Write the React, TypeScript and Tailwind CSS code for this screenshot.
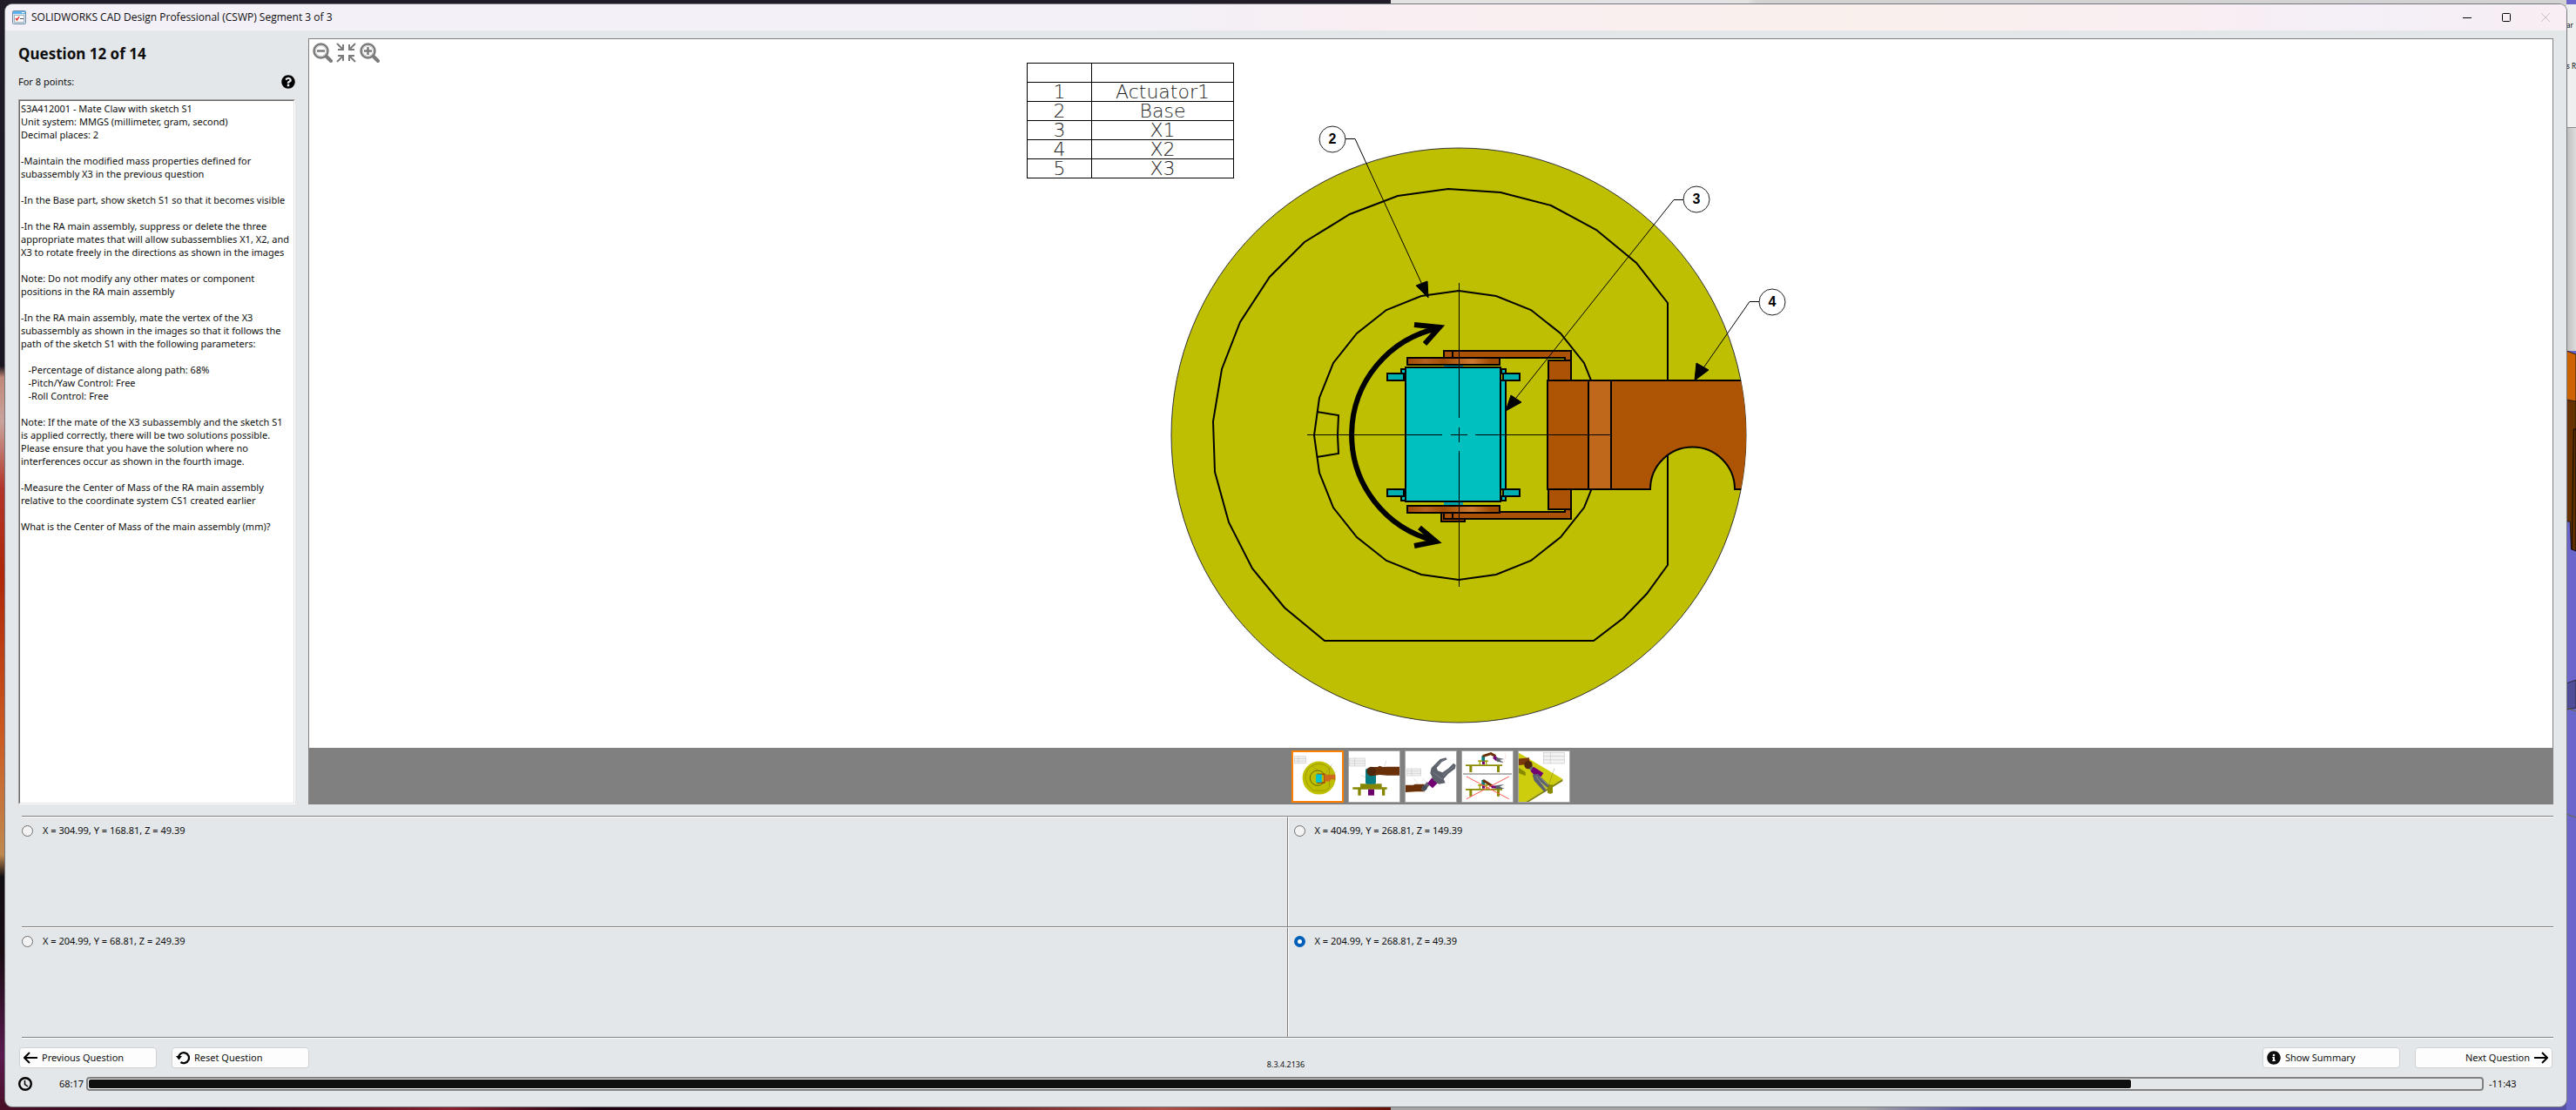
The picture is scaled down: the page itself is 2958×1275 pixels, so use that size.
import { useState } from 'react'
import type { ReactNode } from 'react'
import { FaInfoCircle, FaQuestionCircle } from 'react-icons/fa'

const QUESTION = `S3A412001 - Mate Claw with sketch S1
Unit system: MMGS (millimeter, gram, second)
Decimal places: 2

-Maintain the modified mass properties defined for
subassembly X3 in the previous question

-In the Base part, show sketch S1 so that it becomes visible

-In the RA main assembly, suppress or delete the three
appropriate mates that will allow subassemblies X1, X2, and
X3 to rotate freely in the directions as shown in the images

Note: Do not modify any other mates or component
positions in the RA main assembly

-In the RA main assembly, mate the vertex of the X3
subassembly as shown in the images so that it follows the
path of the sketch S1 with the following parameters:

   -Percentage of distance along path: 68%
   -Pitch/Yaw Control: Free
   -Roll Control: Free

Note: If the mate of the X3 subassembly and the sketch S1
is applied correctly, there will be two solutions possible.
Please ensure that you have the solution where no
interferences occur as shown in the fourth image.

-Measure the Center of Mass of the RA main assembly
relative to the coordinate system CS1 created earlier

What is the Center of Mass of the main assembly (mm)?`

const ANSWERS = [
  'X = 304.99, Y = 168.81, Z = 49.39',
  'X = 404.99, Y = 268.81, Z = 149.39',
  'X = 204.99, Y = 68.81, Z = 249.39',
  'X = 204.99, Y = 268.81, Z = 49.39',
]

const PARTS = ['Actuator1', 'Base', 'X1', 'X2', 'X3']

const TOTAL_SECONDS = 80 * 60
const ELAPSED_SECONDS = 68 * 60 + 17

// 24 sided approximation of the inner sketch circle
const innerRing = Array.from({ length: 24 }, (_, i) => {
  const a = (i * Math.PI) / 12
  return `${Math.round(1675 + 166 * Math.sin(a))},${Math.round(500 - 166 * Math.cos(a))}`
}).join(' ')

function Desktop() {
  return (
    <div className="absolute inset-0 overflow-hidden bg-[#211c28]" aria-hidden="true">
      <div className="absolute inset-y-0 left-0 w-3 bg-[linear-gradient(to_bottom,#211c28_0%,#1b1722_33%,#c08878_34%,#c9a49c_38%,#b3352a_44%,#b02808_52%,#cc5a20_66%,#c08a50_77%,#120f14_79%,#1a0d14_86%,#5a1a50_95%,#4a1028_100%)]" />
      <div className="absolute top-0 right-0 h-3 w-[46%] bg-[linear-gradient(to_right,#e2e2e2_0%,#e2e2e2_30%,#d3d3d3_31%,#d3d3d3_100%)]" />
      <div className="absolute bottom-0 left-0 h-3 w-[55%] bg-[linear-gradient(to_right,#4a1028,#240014_15%,#8a2030_32%,#1b0010_42%,#3a0612_60%,#b05048_82%,#5a0a00_100%)]" />
      <div className="absolute right-0 bottom-0 h-3 w-[46%] bg-[linear-gradient(to_right,#a5a5a5_0%,#a5a5a5_40%,#5450a8_50%,#5450a8_100%)]" />
      <div className="absolute inset-y-0 right-0 flex w-[11px] flex-col bg-[#6b66cc] font-['Noto_Sans',sans-serif] text-[8px] text-black">
        <div className="mt-[5px] h-[142px] shrink-0 border-b border-[#8c8c8c] bg-[#efefef] leading-[47px] whitespace-nowrap">
          <p>ar</p>
          <p>s R</p>
        </div>
        <div className="h-[256px] shrink-0 bg-[linear-gradient(to_right,#bdbdbd,#dcdcdc)]" />
        <svg className="h-[600px] w-[11px] shrink-0" viewBox="0 0 16 600" preserveAspectRatio="none">
          <path d="M0 0 16 4V60H0Z" fill="#cc6200" stroke="#111" />
          <path d="M0 56 16 58V228H8L6 196H0Z" fill="#663300" stroke="#111" />
          <path d="M12 90H16V230L9 228Z" fill="#5c2e00" stroke="#000" />
          <path d="M0 382 16 378V410L0 412Z" fill="#4f4c99" stroke="#222" />
          <path d="M0 410 16 414M0 532 16 536" stroke="#6b6b20" fill="none" />
        </svg>
      </div>
    </div>
  )
}

function TitleBar() {
  return (
    <header className="flex h-[30px] shrink-0 items-center bg-[linear-gradient(to_right,#f3f0f7_0%,#f3f0f7_45%,#f9eef2_54%,#f9f0ec_72%,#f9eef2_85%,#f4eff8_92%,#f8eef3_100%)] pl-2">
      <svg className="size-4" viewBox="0 0 16 16">
        <rect x=".5" y=".5" width="15" height="15" rx="1" fill="#dbe6ee" stroke="#6d8ba5" />
        <rect x="1" y="1" width="14" height="3" fill="#5cb3ee" />
        <path d="M11 2.5h3" stroke="#fff" />
        <rect x="2.500" y="5.500" width="11" height="8" fill="#fff" stroke="#9fb0bd" />
        <path d="m4 9 1.500 2L8 7" stroke="#e02424" strokeWidth="1.400" fill="none" />
        <path d="M9 9.500h4" stroke="#556" />
      </svg>
      <h1 className="ml-[6px] font-['Open_Sans',sans-serif] text-[12px]">SOLIDWORKS CAD Design Professional (CSWP) Segment 3 of 3</h1>
      <div className="mr-[2px] ml-auto flex h-full">
        <button aria-label="Minimize" className="grid w-[45px] place-items-center">
          <svg className="size-[10px]" viewBox="0 0 10 10"><path d="M0 5.500h10" stroke="#000" /></svg>
        </button>
        <button aria-label="Maximize" className="grid w-[45px] place-items-center">
          <svg className="size-[10px]" viewBox="0 0 10 10"><rect x=".5" y=".5" width="9" height="9" rx="1" fill="none" stroke="#000" /></svg>
        </button>
        <button aria-label="Close" disabled className="grid w-[45px] place-items-center">
          <svg className="size-[10px]" viewBox="0 0 10 10"><path d="m0 0 10 10M10 0 0 10" stroke="#c8c2c6" /></svg>
        </button>
      </div>
    </header>
  )
}

function QuestionPanel() {
  return (
    <section className="flex w-[318px] shrink-0 flex-col">
      <h2 className="mt-[6px] text-[17px] leading-6 font-bold">Question 12 of 14</h2>
      <div className="mt-[10px] mb-[10px] flex h-5 items-center justify-between">
        <span>For 8 points:</span>
        <button aria-label="Help"><FaQuestionCircle className="size-4 text-black" /></button>
      </div>
      <div className="flex-1 border border-[#a0a0a0] border-r-white border-b-white bg-white">
        <div className="h-full border border-[#696969] border-r-[#e3e3e3] border-b-[#e3e3e3] pt-px pl-px leading-[15px] whitespace-pre">
          {QUESTION}
        </div>
      </div>
    </section>
  )
}

function Magnifier({ plus = false }: { plus?: boolean }) {
  return (
    <svg className="size-[23px]" viewBox="0 0 23 23" fill="none">
      <path d="m15.500 15.500 5.500 5.500" stroke="#7b7b7b" strokeWidth="4" strokeLinecap="round" />
      <circle cx="9.500" cy="9.500" r="8" stroke="#7b7b7b" strokeWidth="2.500" />
      <circle cx="9.500" cy="9.500" r="6" stroke="#c4c4c4" />
      <path d={plus ? 'M5 9.500h9M9.500 5v9' : 'M5 9.500h9'} stroke="#7b7b7b" strokeWidth="2.500" />
    </svg>
  )
}

function ViewerTools() {
  return (
    <div className="absolute top-1 left-1 flex gap-1">
      <button aria-label="Zoom out"><Magnifier /></button>
      <button aria-label="Fit to window">
        <svg className="size-[23px]" viewBox="0 0 23 23" fill="none" stroke="#7b7b7b" strokeWidth="2">
          <path d="m1 1 6 6M22 1l-6 6M1 22l6-6M22 22l-6-6" />
          <path d="M8 2v6H2M15 2v6h6M8 21v-6H2M15 21v-6h6" />
        </svg>
      </button>
      <button aria-label="Zoom in"><Magnifier plus /></button>
    </div>
  )
}

function Balloon({ x, y, n }: { x: number; y: number; n: number }) {
  return (
    <g>
      <circle cx={x} cy={y} r="15" fill="#fff" stroke="#222" />
      <text x={x} y={y + 5} textAnchor="middle" fill="#000" stroke="none" className="font-['Liberation_Sans',sans-serif] text-[16px] font-bold">{n}</text>
    </g>
  )
}

function Drawing() {
  return (
    <svg className="min-h-0 w-full flex-1" viewBox="1143 45 1000 814">
      <defs>
        <clipPath id="base"><circle cx="1675" cy="500" r="330" /></clipPath>
        <linearGradient id="disc">
          <stop offset="0" stopColor="#a04c04" />
          <stop offset=".2" stopColor="#b86020" />
          <stop offset=".4" stopColor="#a04c04" />
          <stop offset=".7" stopColor="#cf7a34" />
          <stop offset=".9" stopColor="#a04c04" />
        </linearGradient>
      </defs>

      <foreignObject x="1179" y="72" width="240" height="140">
        <table className="w-[238px] table-fixed border-collapse text-center font-['DejaVu_Sans',sans-serif] text-[22px] leading-[21px] font-extralight text-[#222]">
          <colgroup><col className="w-[74px]" /><col /></colgroup>
          <tbody>
            <tr className="h-[22px]"><td className="border border-black p-0" /><td className="border border-black p-0" /></tr>
            {PARTS.map((part, i) => (
              <tr key={part} className="h-[22px]">
                <td className="border border-black p-0">{i + 1}</td>
                <td className="border border-black p-0">{part}</td>
              </tr>
            ))}
          </tbody>
        </table>
      </foreignObject>

      {/* base plate */}
      <circle cx="1675" cy="500" r="330" fill="#bfbf02" stroke="#333" />
      <g fill="none" stroke="#000" strokeWidth="2">
        <polygon points="1663,217 1723,221 1781,236 1833,264 1879,302 1915,348 1915,649 1891,682 1864,710 1830,736 1521,736 1475,698 1438,653 1411,600 1395,542 1393,484 1403,424 1424,370 1458,318 1498,278 1550,246 1605,225" />
        <polygon points={innerRing} />
        <polyline points="1512,473 1537,477 1536,500 1537,521 1512,525" />
      </g>

      {/* rotation arrow */}
      <g fill="none" stroke="#000" strokeWidth="6">
        <path d="M1652 377A125 125 0 0 0 1648 621" />
        <path d="m1624 373 29 3-17 19M1630 606l19 16-25 5" />
      </g>

      {/* fork */}
      <g fill="#ab5206" stroke="#000" strokeWidth="2">
        <path d="M1658 403H1804V437H1778V414H1797V411H1658Z" />
        <path d="M1778 414h26M1668 403v8" />
        <path d="M1655 588H1682V599H1655Z" />
        <path d="M1658 588H1797V585H1778V562H1804V596H1658Z" />
        <path d="M1778 585h26M1668 588v8" />
        <rect x="1616" y="411" width="106" height="8" fill="url(#disc)" />
        <rect x="1616" y="581" width="106" height="8" fill="url(#disc)" />
      </g>

      {/* actuator body */}
      <path d="M1658 420h22v3h-22zM1658 577h22v3h-22z" fill="#00a5a5" />
      <g fill="#00bfbf" stroke="#000" strokeWidth="2">
        <path d="M1723 437h6v125h-6z" />
        <path d="M1609 424h5v5h-5zM1724 424h5v5h-5zM1609 570h5v5h-5zM1724 570h5v5h-5z" />
        <path d="M1593 429h19v8h-19zM1726 429h19v8h-19zM1593 562h19v8h-19zM1726 562h19v8h-19z" fill="#00b0b0" />
        <path d="M1614 422H1723V576H1614Z" />
      </g>

      {/* arm */}
      <g clipPath="url(#base)">
        <path d="M1777 437H2010V562H1992A48 48 0 0 0 1895 562H1777Z" fill="#ae5405" stroke="#000" strokeWidth="2" />
        <rect x="1824" y="438" width="26" height="123" fill="#bf671b" />
        <path d="M1777 437H2010M1824 437V562M1850 437V562" stroke="#000" strokeWidth="2" />
      </g>

      {/* centre mark */}
      <path d="M1501 499.500h155M1666 499.500h19M1694 499.500h156M1675.500 325v155M1675.500 491v17M1675.500 518v156" stroke="#000" fill="none" />

      {/* leaders */}
      <g fill="none" stroke="#000">
        <path d="M1545 159.500h11L1640 342M1933 229.500h-11L1729 472M2021 346.500h-12L1946 437" />
        <path d="m1640 342-14-14 13-5zM1729 472l6-18 12 8zM1946 437l2-20 14 8z" fill="#000" />
        <Balloon x={1530} y={160} n={2} />
        <Balloon x={1948} y={229} n={3} />
        <Balloon x={2035} y={347} n={4} />
      </g>
    </svg>
  )
}

function MiniTable({ x, y, w, h }: { x: number; y: number; w: number; h: number }) {
  return (
    <g stroke="#bbb" fill="#f2f2f2" strokeWidth="1.500">
      <rect x={x} y={y} width={w} height={h} />
      <path d={`M${x + w / 3} ${y}v${h}M${x} ${y + h / 3}h${w}M${x} ${y + (2 * h) / 3}h${w}`} />
    </g>
  )
}

function Bench() {
  return (
    <g fill="#8a8a00">
      <path d="M15 49H141V54H132V75H123V54H37V75H28V54H15Z" />
      <path d="M58 34H92V39H88V49H84V39H66V49H62V39H58Z" fill="#a0a000" />
      <rect x="72" y="38" width="9" height="10" fill="#730073" />
      <rect x="70" y="18" width="11" height="18" rx="3" fill="#087c80" />
    </g>
  )
}

const THUMBS: { label: string; art: ReactNode }[] = [
  {
    label: 'Top view',
    art: (
      <>
        <MiniTable x={8} y={18} w={40} h={25} />
        <circle cx="95" cy="95" r="59" fill="#bfbf02" />
        <path d="M58 60Q95 28 132 60V128L118 140H74Q28 100 58 60Z" fill="none" stroke="#8c8c00" strokeWidth="2" />
        <circle cx="90" cy="95" r="27" fill="none" stroke="#666600" strokeWidth="3" />
        <path d="M88 82H114V112H88" fill="none" stroke="#a04c04" strokeWidth="5" />
        <rect x="84" y="82" width="21" height="29" fill="#00c4d0" />
        <path d="M114 83H153V104Q140 94 133 107H114Z" fill="#cf6a1c" />
        <path d="m70 50 20 17M142 45l-30 45M158 70l-14 14" stroke="#777" />
      </>
    ),
  },
  {
    label: 'Side view',
    art: (
      <>
        <MiniTable x={5} y={27} w={53} h={27} />
        <path d="M16 127H42V115H116V127H134V134H127V155H117V134H44V155H34V134H16Z" fill="#868600" />
        <rect x="69" y="134" width="21" height="21" fill="#6b006b" />
        <rect x="60" y="62" width="36" height="54" rx="6" fill="#087c80" />
        <path d="M75 57H102L108 53 120 57 135 56H178V86H135L108 84 82 88Z" fill="#6a3008" />
        <circle cx="80" cy="72" r="16" fill="#51280c" />
        <path d="M132 35 124 58M45 85l16 8" stroke="#999" />
      </>
    ),
  },
  {
    label: 'Claw view',
    art: (
      <>
        <MiniTable x={8} y={63} w={48} h={24} />
        <path d="M3 119H30L35 116H68V142H40L3 144Z" fill="#6a3008" />
        <path d="m62 138 20-26" stroke="#606570" strokeWidth="14" />
        <circle cx="68" cy="128" r="9" fill="#474c58" />
        <path d="M94 94 114 112 96 130 78 114Z" fill="#730073" />
        {/* palm and the two fingers */}
        <path d="M88 78 92 60 104 48 122 30 142 25 146 31 128 40 110 60 114 70 130 76 150 62 168 44 176 50 174 62 150 80 134 98 140 112 118 116 100 104Z" fill="#5c616b" />
        <path d="m106 52 32-22M132 86l38-32M98 76l32 24" stroke="#8b9099" strokeWidth="2" />
        <path d="m60 95 20 20M30 95l16 20" stroke="#aaa" />
      </>
    ),
  },
  {
    label: 'Correct and incorrect solutions',
    art: (
      <>
        <Bench />
        <path d="m74 20 28-9 16 9" stroke="#6a3008" strokeWidth="9" fill="none" />
        <path d="m112 22 12 10" stroke="#730073" strokeWidth="12" />
        <path d="M120 24 148 30 132 32 146 42 122 38Z" fill="#5c616b" />
        <path d="M150 8q8 20-10 40" stroke="#f6b0b0" fill="none" />
        <path d="M6 81H174" stroke="#666" strokeWidth="3" />
        <g transform="translate(0 83)">
          <Bench />
          <path d="m75 20 32 20" stroke="#6a3008" strokeWidth="9" />
          <path d="m104 42 20 2" stroke="#730073" strokeWidth="9" />
          <path d="M118 38 148 34 132 42 150 48 120 50Z" fill="#5c616b" />
        </g>
        <path d="M18 90 164 167M164 90 18 167" stroke="#ff5a50" strokeWidth="3" />
      </>
    ),
  },
  {
    label: 'Isometric view',
    art: (
      <>
        <path d="M3 8 154 98 26 178H3Z" fill="#cdcd0e" />
        <path d="M154 98V106L36 178H26Z" fill="#808000" />
        <path d="M102 118h18v28q-9 6-18 0z" fill="#8a8a00" />
        <path d="M3 60 26 74V88L3 78Z" fill="#8a8a00" />
        <path d="M0 40 40 36" stroke="#7a380a" strokeWidth="22" />
        <circle cx="36" cy="50" r="14" fill="#51280c" />
        <path d="m44 58 20 26" stroke="#606570" strokeWidth="14" />
        <path d="M54 56 88 78 80 90 60 88 44 72Z" fill="#730073" />
        <path d="M50 84 68 80 108 120 102 128 74 104 98 138 92 144 56 104Z" fill="#5c616b" />
        <path d="m62 88 36 46M74 90l30 30" stroke="#8b9099" strokeWidth="3" />
        <MiniTable x={88} y={7} w={72} h={38} />
        <path d="m126 62-20 56" stroke="#555" />
      </>
    ),
  },
]

function Viewer() {
  const [current, setCurrent] = useState(0)
  return (
    <section className="relative flex min-w-0 flex-1 flex-col border border-b-0 border-[#808080] bg-white">
      <ViewerTools />
      <Drawing />
      <div className="flex h-[65px] shrink-0 items-center justify-center gap-[5px] bg-[#808080]">
        {THUMBS.map((thumb, i) => (
          <button key={thumb.label} aria-label={thumb.label} onClick={() => setCurrent(i)}
            className={`size-[60px] bg-white ${i === current ? 'border-2 border-[#ff8000]' : 'border border-[#a8a8a8]'}`}>
            <svg className="size-full" viewBox="3 3 174 174">{thumb.art}</svg>
          </button>
        ))}
      </div>
    </section>
  )
}

function Answers() {
  const [picked, setPicked] = useState(3)
  return (
    <fieldset className="mt-[13px] ml-1 grid h-[256px] shrink-0 grid-cols-2 grid-rows-[127px_127px] border-b border-white">
      <legend className="sr-only">Answers</legend>
      {ANSWERS.map((answer, i) => (
        <div key={answer} className="border-t border-[#808080]">
          <div className={`h-full border-t border-white ${i % 2 === 0 ? 'border-r border-r-[#808080]' : 'border-l border-l-white pl-[6px]'}`}>
            <label className="flex w-fit gap-[11px] pt-[9px]">
              <input type="radio" name="answer" checked={picked === i} onChange={() => setPicked(i)}
                className="size-[13px] appearance-none rounded-full border border-[#6e6e6e] bg-[#f3f3f3] checked:border-4 checked:border-[#005fb8] checked:bg-white" />
              <span className="leading-[11px]">{answer}</span>
            </label>
          </div>
        </div>
      ))}
      <div className="col-span-2 h-px bg-[#808080]" />
    </fieldset>
  )
}

function ArrowIcon({ right = false }: { right?: boolean }) {
  return (
    <svg className="size-4" viewBox="0 0 16 16" fill="none" stroke="#000" strokeWidth="2">
      <path d={right ? 'M0 8h15M9 2l6 6-6 6' : 'M16 8H1M7 2 1 8l6 6'} />
    </svg>
  )
}

const navButton = 'flex h-6 w-[158px] items-center gap-[5px] rounded-[4px] border border-[#cfd2d5] bg-[#fdfdfd] px-1'

function Footer() {
  return (
    <footer className="shrink-0">
      <div className="mt-[10px] flex items-center gap-[17px] px-px">
        <button className={navButton}><ArrowIcon />Previous Question</button>
        <button className={navButton}>
          <svg className="size-4" viewBox="0 0 16 16" fill="none">
            <path d="M3 8a6 6 0 1 1 2.500 5" stroke="#000" strokeWidth="2.300" />
            <path d="M0 6h7l-3.500 4.500Z" fill="#000" />
          </svg>
          Reset Question
        </button>
        <span className="mx-auto self-end text-[9px] leading-[9px]">8.3.4.2136</span>
        <button className={navButton}><FaInfoCircle className="size-4" />Show Summary</button>
        <button className={`${navButton} justify-end`}>Next Question<ArrowIcon right /></button>
      </div>
      <div className="mt-[10px] flex h-4 items-center">
        <svg className="size-4" viewBox="0 0 16 16" fill="none" stroke="#000">
          <circle cx="8" cy="8" r="6.800" strokeWidth="2.400" />
          <path d="M7.500 4v4.500L11 11" strokeWidth="1.500" />
        </svg>
        <span className="ml-2 w-[54px] pr-[3px] text-right">68:17</span>
        <div role="progressbar" aria-label="Time used" aria-valuemin={0} aria-valuemax={TOTAL_SECONDS} aria-valuenow={ELAPSED_SECONDS}
          className="flex h-4 flex-1 rounded-[4px] border-2 border-[#808080] p-px">
          <div className="rounded-[2px] bg-[#0f0f0f] shadow-[0_0_0_1px_#f2f4f5]" style={{ width: `${(ELAPSED_SECONDS / TOTAL_SECONDS) * 100}%` }} />
        </div>
        <span className="w-20 pl-[6px]">-11:43</span>
      </div>
    </footer>
  )
}

export default function App() {
  return (
    <div className="relative flex h-screen min-h-[800px] pt-[5px] pr-[11px] pb-1 pl-[6px] font-['Noto_Sans','Open_Sans',sans-serif] text-[11px] text-[#0d0d0d]">
      <Desktop />
      <div className="relative flex min-w-0 flex-1 flex-col overflow-hidden rounded-lg bg-[#e3e7ea] shadow-[0_0_0_1px_#77777f]">
        <TitleBar />
        <main className="flex min-h-0 flex-1 flex-col pt-[9px] pr-[15px] pb-[18px] pl-[15px]">
          <div className="flex min-h-0 flex-1 gap-[15px]">
            <QuestionPanel />
            <Viewer />
          </div>
          <Answers />
          <Footer />
        </main>
      </div>
    </div>
  )
}
